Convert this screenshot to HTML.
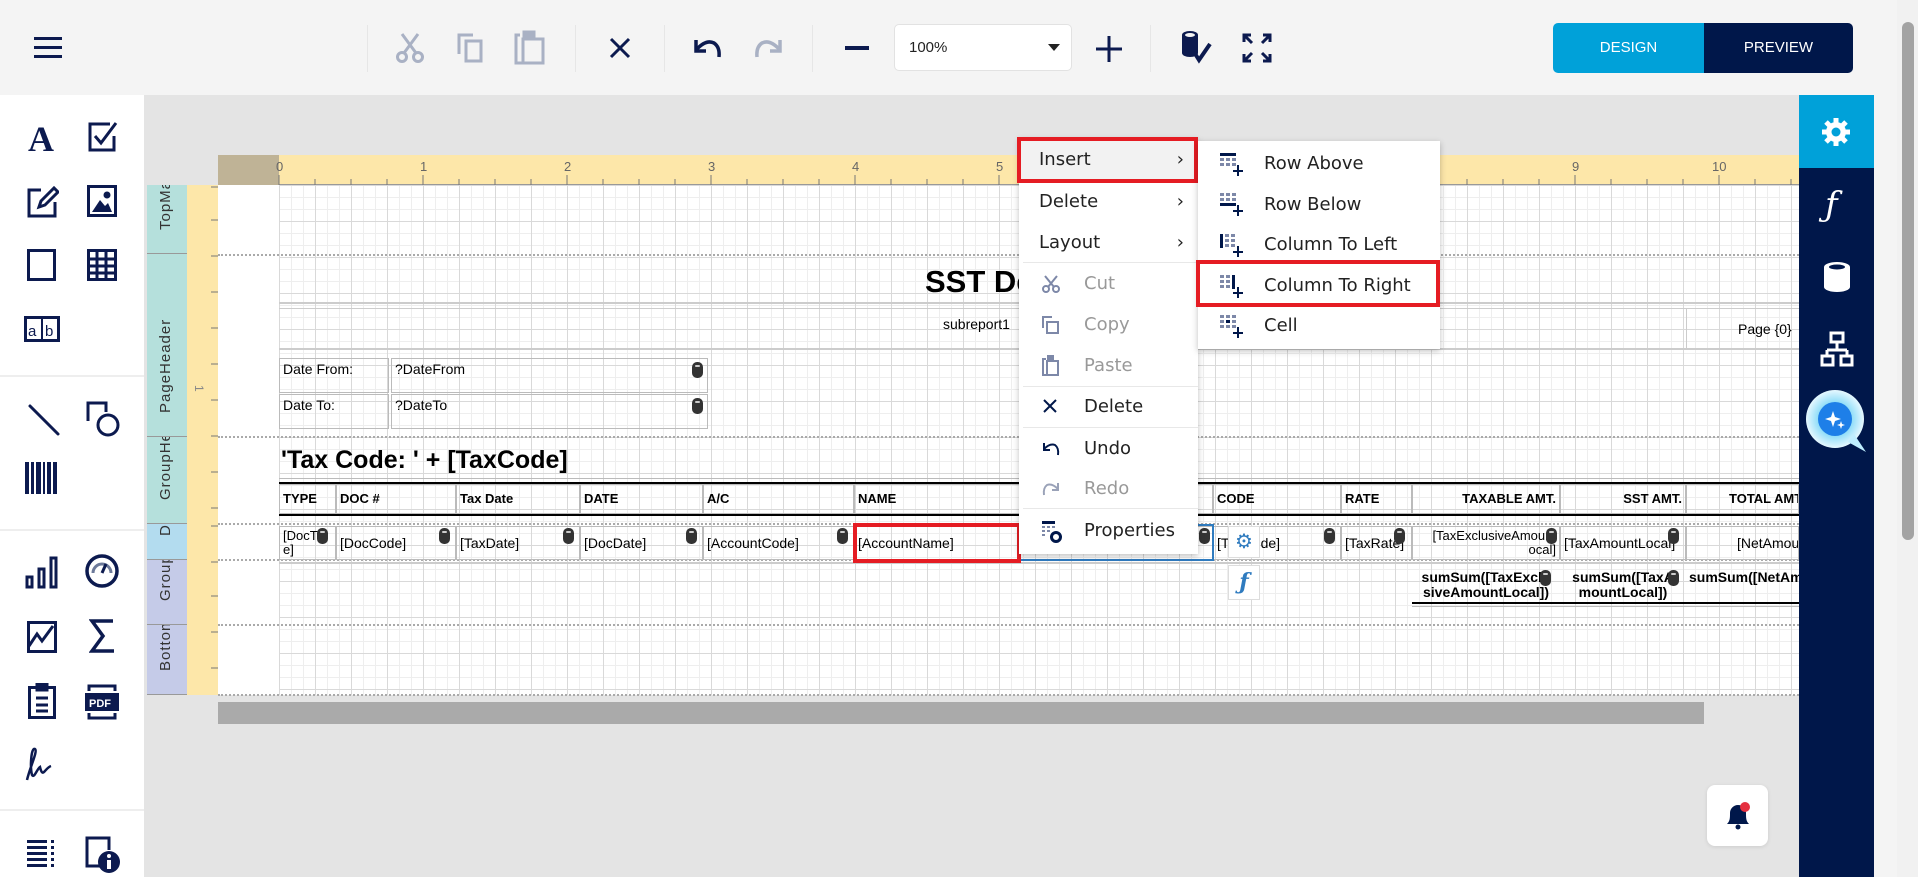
<!DOCTYPE html>
<html><head><meta charset="utf-8"><style>
*{box-sizing:border-box;margin:0;padding:0}
body{width:1918px;height:877px;overflow:hidden;background:#e4e4e4;font-family:"Liberation Sans",sans-serif;position:relative;color:#000}
.a{position:absolute}
.tb{left:0;top:0;width:1918px;height:95px;background:#f4f4f4}
.sep{position:absolute;top:25px;width:1px;height:47px;background:#e6e6e6}
.side{left:0;top:95px;width:144px;height:782px;background:#fff}
.hl{position:absolute;left:0;width:144px;height:2px;background:#eee}
.ic{position:absolute}
.grid{background-color:#fff;background-image:
linear-gradient(to right,#d9d9d9 1px,transparent 1px),
linear-gradient(to bottom,#d9d9d9 1px,transparent 1px),
linear-gradient(to right,#eeeeee 1px,transparent 1px),
linear-gradient(to bottom,#eeeeee 1px,transparent 1px);
background-size:36px 36px,36px 36px,12px 12px,12px 12px}
.band{position:absolute;left:147px;width:40px;font-size:15px;color:#333;overflow:hidden;border-bottom:1px solid #999}
.band span{position:absolute;left:10px;bottom:6px;transform-origin:0 0;transform:rotate(-90deg) translate(0,0);white-space:nowrap;letter-spacing:1px}
.dash{position:absolute;left:218px;width:1581px;border-top:2px dotted #aaa}
.cell{position:absolute;font-size:14px;border:1px solid #bbb;padding:2px 3px;overflow:hidden;white-space:nowrap;line-height:16px}
.h{font-weight:bold;font-size:13px}
.db{position:absolute;width:11px;height:16px;background:#333;border-radius:5px}
.db:after{content:"";position:absolute;left:3px;top:3px;width:5px;height:2px;background:#ccc;border-radius:1px}
.menu{position:absolute;background:#fff;box-shadow:0 2px 6px rgba(0,0,0,.25);font-family:"DejaVu Sans","Liberation Sans",sans-serif;font-size:18px;color:#222}
.mi{position:absolute;left:0;right:0;height:41px;line-height:41px}
.dis{color:#999}
.msep{position:absolute;left:4px;right:0;height:1px;background:#e8e8e8}
.red{position:absolute;border:4px solid #e51c23}
</style></head><body>

<!-- toolbar -->
<div class="a tb"></div>
<svg class="ic" style="left:34px;top:36px" width="28" height="24"><g fill="#0c1a4f"><rect y="1" width="28" height="3"/><rect y="10" width="28" height="3"/><rect y="19" width="28" height="3"/></g></svg>
<div class="sep" style="left:367px"></div>
<svg class="ic" style="left:394px;top:32px" width="32" height="32" fill="none" stroke="#a9b1c4" stroke-width="3"><circle cx="8" cy="25" r="4.5"/><circle cx="24" cy="25" r="4.5"/><path d="M10 21 L24 2 M22 21 L8 2"/></svg>
<svg class="ic" style="left:456px;top:32px" width="30" height="32" fill="none" stroke="#a9b1c4" stroke-width="3"><path d="M3 22V3h14"/><rect x="10" y="9" width="15" height="20"/></svg>
<svg class="ic" style="left:514px;top:29px" width="32" height="36" fill="none" stroke="#a9b1c4" stroke-width="3"><path d="M6 6H2v28h6"/><rect x="9" y="10" width="20" height="24"/><rect x="10" y="3" width="10" height="5" fill="#a9b1c4"/></svg>
<div class="sep" style="left:575px"></div>
<svg class="ic" style="left:608px;top:36px" width="24" height="24" stroke="#0c1a4f" stroke-width="3"><path d="M3 3L21 21M21 3L3 21"/></svg>
<div class="sep" style="left:664px"></div>
<svg class="ic" style="left:692px;top:35px" width="32" height="26" fill="none" stroke="#0c1a4f" stroke-width="3.5"><path d="M4 5V16H14"/><path d="M4 15Q14 4 22 8Q28 12 27 22"/></svg>
<svg class="ic" style="left:752px;top:35px" width="32" height="26" fill="none" stroke="#a9b1c4" stroke-width="3.5"><path d="M28 5V16H18"/><path d="M28 15Q18 4 10 8Q4 12 5 22"/></svg>
<div class="sep" style="left:812px"></div>
<div class="a" style="left:845px;top:46px;width:24px;height:4px;background:#0c1a4f"></div>
<div class="a" style="left:894px;top:24px;width:178px;height:47px;background:#fff;border:1px solid #e2e2e2;border-radius:5px;font-size:15px;line-height:45px;padding-left:14px;color:#222">100%</div>
<svg class="ic" style="left:1048px;top:44px" width="12" height="8"><path d="M0 0H12L6 7z" fill="#222"/></svg>
<svg class="ic" style="left:1096px;top:36px" width="26" height="26" stroke="#0c1a4f" stroke-width="3"><path d="M13 0V26M0 13H26"/></svg>
<div class="sep" style="left:1150px"></div>
<svg class="ic" style="left:1180px;top:30px" width="36" height="36"><path d="M2 5a8 4 0 0 1 16 0v18a8 4 0 0 1-16 0z" fill="#0c1a4f"/><ellipse cx="10" cy="5" rx="5" ry="2" fill="#f4f4f4"/><path d="M14 22l5 8 11-16" fill="none" stroke="#0c1a4f" stroke-width="4"/></svg>
<svg class="ic" style="left:1242px;top:33px" width="30" height="30" fill="none" stroke="#0c1a4f" stroke-width="3"><path d="M2 9V2h7M2 2l8 8M28 9V2h-7M28 2l-8 8M2 21v7h7M2 28l8-8M28 21v7h-7M28 28l-8-8"/></svg>
<div class="a" style="left:1553px;top:23px;width:151px;height:50px;background:#00a1d9;border-radius:5px 0 0 5px;color:#fff;font-size:15px;text-align:center;line-height:50px">DESIGN</div>
<div class="a" style="left:1704px;top:23px;width:149px;height:50px;background:#00174a;border-radius:0 5px 5px 0;color:#fff;font-size:15px;text-align:center;line-height:50px">PREVIEW</div>

<!-- scroll -->
<div class="a" style="left:1874px;top:0;width:23px;height:877px;background:#f4f4f4"></div>
<div class="a" style="left:1897px;top:0;width:21px;height:877px;background:#f1f1f1"></div>
<div class="a" style="left:1902px;top:22px;width:12px;height:518px;background:#a3a3a3;border-radius:6px"></div>

<!-- left sidebar -->
<div class="a side"></div>
<div class="hl" style="top:375px"></div><div class="hl" style="top:529px"></div><div class="hl" style="top:809px"></div>
<div class="a" style="left:28px;top:118px;font:bold 36px 'Liberation Serif',serif;color:#0c1a4f">A</div>
<svg class="ic" style="left:88px;top:122px" width="30" height="30" fill="none" stroke="#0c1a4f" stroke-width="3"><path d="M22 2H2v26h24V14"/><path d="M7 14l6 7L28 1"/></svg>
<svg class="ic" style="left:27px;top:186px" width="32" height="32" fill="none" stroke="#0c1a4f" stroke-width="3"><path d="M14 4H2v26h26V16"/><path d="M12 21l2-6L27 2l4 4-13 13z"/></svg>
<svg class="ic" style="left:87px;top:185px" width="30" height="32"><rect x="1.5" y="1.5" width="27" height="29" fill="none" stroke="#0c1a4f" stroke-width="3"/><path d="M5 27l8-12 5 6 3-3 4 9z" fill="#0c1a4f"/><circle cx="20" cy="10" r="3.5" fill="#0c1a4f"/></svg>
<svg class="ic" style="left:27px;top:249px" width="30" height="32" fill="none" stroke="#0c1a4f" stroke-width="3"><rect x="1.5" y="1.5" width="26" height="29"/></svg>
<svg class="ic" style="left:87px;top:249px" width="30" height="32"><rect x="1.5" y="1.5" width="27" height="29" fill="none" stroke="#0c1a4f" stroke-width="3"/><path d="M1 10H29M1 17H29M1 24H29M10 1V31M19 1V31" stroke="#0c1a4f" stroke-width="3"/></svg>
<svg class="ic" style="left:24px;top:316px" width="36" height="26"><rect x="1.5" y="1.5" width="33" height="23" fill="none" stroke="#0c1a4f" stroke-width="3"/><path d="M18 1V25" stroke="#0c1a4f" stroke-width="2"/><text x="4" y="20" font-size="15" font-family="Liberation Sans" fill="#0c1a4f">a</text><text x="21" y="20" font-size="15" font-family="Liberation Sans" fill="#0c1a4f">b</text></svg>
<svg class="ic" style="left:27px;top:403px" width="34" height="34" stroke="#0c1a4f" stroke-width="3" stroke-linecap="round"><path d="M3 3L31 31"/></svg>
<svg class="ic" style="left:86px;top:401px" width="34" height="36" fill="none" stroke="#0c1a4f" stroke-width="3"><path d="M2 20V2h18v9"/><circle cx="22" cy="24" r="10" fill="#fff"/></svg>
<svg class="ic" style="left:25px;top:462px" width="34" height="32" fill="#0c1a4f"><rect x="0" y="0" width="4" height="32"/><rect x="6" y="0" width="3" height="32"/><rect x="11" y="0" width="5" height="32"/><rect x="18" y="0" width="2" height="32"/><rect x="22" y="0" width="4" height="32"/><rect x="28" y="0" width="4" height="32"/></svg>
<svg class="ic" style="left:25px;top:555px" width="34" height="34" fill="none" stroke="#0c1a4f" stroke-width="3"><rect x="2" y="22" width="5" height="10"/><rect x="14" y="14" width="5" height="18"/><rect x="26" y="3" width="5" height="29"/></svg>
<svg class="ic" style="left:84px;top:553px" width="36" height="36" fill="none" stroke="#0c1a4f" stroke-width="3.5"><circle cx="18" cy="18" r="15"/><path d="M9 20a9 9 0 0 1 18 0" stroke="#6d7a9a" stroke-width="3"/><path d="M18 20l4-9" stroke-width="3"/></svg>
<svg class="ic" style="left:27px;top:621px" width="30" height="32" fill="none" stroke="#0c1a4f" stroke-width="3"><rect x="1.5" y="1.5" width="27" height="29"/><path d="M2 25l8-12 5 7 11-15"/></svg>
<svg class="ic" style="left:89px;top:619px" width="26" height="34" fill="none" stroke="#0c1a4f" stroke-width="3.5"><path d="M24 2H3l11 15L3 32h22"/></svg>
<svg class="ic" style="left:28px;top:683px" width="28" height="36" fill="none" stroke="#0c1a4f" stroke-width="3"><rect x="1.5" y="4.5" width="25" height="30"/><rect x="9" y="1" width="10" height="6" fill="#0c1a4f"/><path d="M8 15h12M8 22h12M8 28h12"/></svg>
<svg class="ic" style="left:85px;top:684px" width="34" height="36"><path d="M4 7V2h26v5M4 29v5h26v-5" fill="none" stroke="#0c1a4f" stroke-width="3"/><rect x="0" y="9" width="34" height="18" fill="#0c1a4f"/><text x="4" y="23" font-size="11" font-weight="bold" font-family="Liberation Sans" fill="#fff">PDF</text></svg>
<svg class="ic" style="left:24px;top:747px" width="36" height="34" fill="none" stroke="#0c1a4f" stroke-width="2.5"><path d="M3 33C6 20 14 4 11 2 7 0 6 20 8 28c2 4 5-6 8-8 1 4 2 7 4 5 2-2 4-5 7-6"/></svg>
<svg class="ic" style="left:27px;top:840px" width="30" height="30" fill="#0c1a4f"><rect x="0" y="0" width="20" height="3"/><rect x="0" y="6" width="20" height="3"/><rect x="0" y="12" width="20" height="3"/><rect x="0" y="18" width="20" height="3"/><rect x="0" y="24" width="20" height="3"/><rect x="24" y="0" width="3" height="3"/><rect x="24" y="6" width="3" height="3"/><rect x="24" y="12" width="3" height="3"/><rect x="24" y="18" width="3" height="3"/><rect x="24" y="24" width="3" height="3"/></svg>
<svg class="ic" style="left:85px;top:836px" width="36" height="38"><path d="M18 30H2V2h22v12" fill="none" stroke="#0c1a4f" stroke-width="3"/><circle cx="24" cy="26" r="11" fill="#0c1a4f"/><rect x="22" y="24" width="4" height="9" fill="#fff"/><circle cx="24" cy="20" r="2" fill="#fff"/></svg>

<!-- right panel -->
<div class="a" style="left:1799px;top:95px;width:75px;height:782px;background:#00174a"></div>
<div class="a" style="left:1799px;top:95px;width:75px;height:73px;background:#00a1d9"></div>
<svg class="ic" style="left:1821px;top:117px" width="30" height="30" viewBox="0 0 30 30"><g fill="#fff"><circle cx="15" cy="15" r="10"/><g stroke="#fff" stroke-width="5"><path d="M15 1V29M1 15H29M5 5L25 25M25 5L5 25"/></g></g><circle cx="15" cy="15" r="4.5" fill="#00a1d9"/></svg>
<div class="a" style="left:1825px;top:185px;color:#fff;font:italic 34px 'DejaVu Serif',serif">ƒ</div>
<svg class="ic" style="left:1824px;top:262px" width="26" height="30"><path d="M0 5a13 5 0 0 1 26 0v20a13 5 0 0 1-26 0z" fill="#fff"/><ellipse cx="13" cy="5" rx="8" ry="2.5" fill="#00174a"/></svg>
<svg class="ic" style="left:1820px;top:331px" width="34" height="36" fill="none" stroke="#fff" stroke-width="3"><rect x="11" y="2" width="12" height="9"/><path d="M17 11v8M7 19v6M27 19v6M7 19h20"/><rect x="2" y="25" width="11" height="9"/><rect x="21" y="25" width="11" height="9"/></svg>
<svg class="ic" style="left:1804px;top:387px" width="66" height="68"><defs><radialGradient id="g"><stop offset="0.5" stop-color="#7fd8f7"/><stop offset="1" stop-color="#e6f8ff"/></radialGradient></defs><circle cx="31" cy="32" r="29" fill="url(#g)"/><path d="M44 55l18 10-12-18z" fill="#bfeeff"/><circle cx="31" cy="32" r="17" fill="#1e7fe8"/><path d="M29 24l2 6 6 2-6 2-2 6-2-6-6-2 6-2z M37 34l1 3 3 1-3 1-1 3-1-3-3-1 3-1z" fill="#fff"/></svg>

<!-- canvas: ruler -->
<div class="a" style="left:218px;top:155px;width:1581px;height:30px;background:#fde7a9;border-bottom:1px solid #999"></div>
<div class="a" style="left:218px;top:155px;width:61px;height:30px;background:#bfb396"></div>
<svg class="ic" style="left:218px;top:155px" width="1581" height="30">
<g stroke="#777" stroke-width="1">
<path d="M61 20V30M97 24V30M133 24V30M169 24V30M205 20V30M241 24V30M277 24V30M313 24V30M349 20V30M385 24V30M421 24V30M457 24V30M493 20V30M529 24V30M565 24V30M601 24V30M637 20V30M673 24V30M709 24V30M745 24V30M781 20V30M817 24V30M853 24V30M889 24V30M925 20V30M961 24V30M997 24V30M1033 24V30M1069 20V30M1105 24V30M1141 24V30M1177 24V30M1213 20V30M1249 24V30M1285 24V30M1321 24V30M1357 20V30M1393 24V30M1429 24V30M1465 24V30M1501 20V30M1537 24V30M1573 24V30"/>
</g>
<g font-family="Liberation Sans" font-size="13" fill="#666"><text x="58" y="16">0</text><text x="202" y="16">1</text><text x="346" y="16">2</text><text x="490" y="16">3</text><text x="634" y="16">4</text><text x="778" y="16">5</text><text x="1354" y="16">9</text><text x="1494" y="16">10</text></g>
</svg>

<!-- band labels -->
<div class="band" style="top:185px;height:69px;background:#b5e0dc"><span>TopMar</span></div>
<div class="band" style="top:254px;height:183px;background:#b5e0dc"><span>PageHeader</span></div>
<div class="band" style="top:437px;height:87px;background:#b5e0dc"><span>GroupHea</span></div>
<div class="band" style="top:524px;height:36px;background:#b3dcef"><span>Del</span></div>
<div class="band" style="top:560px;height:65px;background:#c5cbe8"><span>GroupF</span></div>
<div class="band" style="top:625px;height:70px;background:#c5cbe8"><span>Bottoml</span></div>
<div class="a" style="left:187px;top:185px;width:31px;height:510px;background:#fde7a9"></div>
<svg class="ic" style="left:187px;top:185px" width="31" height="510"><g stroke="#777"><path d="M24 2H31M24 35H31M24 71H31M24 107H31M24 143H31M24 179H31M24 215H31M24 251H31M24 287H31M24 323H31M24 341H31M24 377H31M24 411H31M24 447H31M24 483H31"/></g><g font-family="Liberation Sans" font-size="12" fill="#888"><text x="9" y="207" transform="rotate(90 12 203)">1</text></g></svg>

<!-- page -->
<div class="a" style="left:218px;top:185px;width:61px;height:510px;background:#fff"></div>
<div class="a grid" style="left:279px;top:185px;width:1520px;height:510px;background-position:0 0"></div>
<div class="dash" style="top:254px"></div><div class="dash" style="top:436px"></div><div class="dash" style="top:523px"></div><div class="dash" style="top:559px"></div><div class="dash" style="top:624px"></div><div class="dash" style="top:694px"></div>
<div class="a" style="left:218px;top:702px;width:1486px;height:22px;background:#aaa"></div>

<!-- page header contents -->
<div class="a" style="left:279px;top:302px;width:1520px;height:2px;background:#ccc"></div>
<div class="a" style="left:279px;top:308px;width:1520px;height:1px;background:#ccc"></div>
<div class="a" style="left:279px;top:348px;width:1520px;height:2px;background:#ccc"></div>
<div class="a" style="left:1686px;top:308px;width:1px;height:41px;background:#ccc"></div>
<div class="a" style="left:925px;top:264px;font-weight:bold;font-size:31px">SST Details</div>
<div class="a" style="left:943px;top:316px;font-size:14px">subreport1</div>
<div class="a" style="left:1738px;top:321px;font-size:14px">Page {0}</div>
<div class="cell" style="left:279px;top:358px;width:110px;height:35px">Date From:</div>
<div class="cell" style="left:391px;top:358px;width:317px;height:35px">?DateFrom</div>
<div class="cell" style="left:279px;top:394px;width:110px;height:35px">Date To:</div>
<div class="cell" style="left:391px;top:394px;width:317px;height:35px">?DateTo</div>
<div class="db" style="left:692px;top:362px"></div><div class="db" style="left:692px;top:398px"></div>

<!-- group header -->
<div class="a" style="left:281px;top:446px;font-weight:bold;font-size:25px">'Tax Code: ' + [TaxCode]</div>
<div class="a" style="left:279px;top:478px;width:1520px;height:1px;background:#bbb"></div>
<div class="a" style="left:279px;top:482px;width:1520px;height:2px;background:#000"></div>
<div class="a" style="left:279px;top:514px;width:1520px;height:2px;background:#000"></div>
<div class="cell h" style="left:279px;top:484px;width:57px;height:30px;line-height:24px">TYPE</div>
<div class="cell h" style="left:336px;top:484px;width:120px;height:30px;line-height:24px">DOC #</div>
<div class="cell h" style="left:456px;top:484px;width:124px;height:30px;line-height:24px">Tax Date</div>
<div class="cell h" style="left:580px;top:484px;width:123px;height:30px;line-height:24px">DATE</div>
<div class="cell h" style="left:703px;top:484px;width:151px;height:30px;line-height:24px">A/C</div>
<div class="cell h" style="left:854px;top:484px;width:359px;height:30px;line-height:24px">NAME</div>
<div class="cell h" style="left:1213px;top:484px;width:128px;height:30px;line-height:24px">CODE</div>
<div class="cell h" style="left:1341px;top:484px;width:71px;height:30px;line-height:24px">RATE</div>
<div class="cell h" style="left:1412px;top:484px;width:148px;height:30px;line-height:24px;text-align:right">TAXABLE AMT.</div>
<div class="cell h" style="left:1560px;top:484px;width:126px;height:30px;line-height:24px;text-align:right">SST AMT.</div>
<div class="cell h" style="left:1686px;top:484px;width:113px;height:30px;line-height:24px;padding-left:42px">TOTAL AMT.</div>

<!-- detail -->
<div class="cell" style="left:279px;top:526px;width:57px;height:34px;font-size:13px;line-height:14px;white-space:normal">[DocT<br>e]</div>
<div class="cell" style="left:336px;top:526px;width:120px;height:34px;line-height:28px">[DocCode]</div>
<div class="cell" style="left:456px;top:526px;width:124px;height:34px;line-height:28px">[TaxDate]</div>
<div class="cell" style="left:580px;top:526px;width:123px;height:34px;line-height:28px">[DocDate]</div>
<div class="cell" style="left:703px;top:526px;width:151px;height:34px;line-height:28px">[AccountCode]</div>
<div class="cell" style="left:854px;top:526px;width:359px;height:34px;line-height:28px">[AccountName]</div>
<div class="cell" style="left:1213px;top:526px;width:128px;height:34px;line-height:28px">[TaxCode]</div>
<div class="cell" style="left:1341px;top:526px;width:71px;height:34px;line-height:28px">[TaxRate]</div>
<div class="cell" style="left:1412px;top:526px;width:148px;height:34px;font-size:13px;line-height:14px;white-space:normal;text-align:right">[TaxExclusiveAmount<br>ocal]</div>
<div class="cell" style="left:1560px;top:526px;width:126px;height:34px;line-height:28px">[TaxAmountLocal]</div>
<div class="cell" style="left:1686px;top:526px;width:113px;height:34px;line-height:28px;padding-left:50px">[NetAmountLocal]</div>
<div class="db" style="left:317px;top:528px"></div><div class="db" style="left:439px;top:528px"></div><div class="db" style="left:563px;top:528px"></div><div class="db" style="left:686px;top:528px"></div><div class="db" style="left:837px;top:528px"></div><div class="db" style="left:1199px;top:528px"></div><div class="db" style="left:1324px;top:528px"></div><div class="db" style="left:1394px;top:528px"></div><div class="db" style="left:1546px;top:528px"></div><div class="db" style="left:1668px;top:528px"></div>
<div class="a" style="left:279px;top:562px;width:1520px;height:2px;background:#ccc"></div>
<div class="a" style="left:1020px;top:524px;width:194px;height:37px;border:2px solid #2f7bbf;border-left:none"></div>
<div class="red" style="left:853px;top:523px;width:168px;height:40px"></div>
<div class="a" style="left:1228px;top:526px;width:32px;height:32px;background:#fff;border:1px solid #ddd;color:#2f7bbf;font-size:20px;text-align:center;line-height:30px">⚙</div>
<div class="a" style="left:1228px;top:565px;width:32px;height:35px;background:#fff;border:1px solid #ddd;color:#2f7bbf;font:bold italic 22px 'DejaVu Serif',serif;text-align:center;line-height:33px">ƒ</div>

<!-- group footer -->
<div class="cell h" style="left:1412px;top:568px;width:148px;height:34px;font-size:14px;line-height:15px;border:none;text-align:center;white-space:normal">sumSum([TaxExclu<br>siveAmountLocal])</div>
<div class="cell h" style="left:1560px;top:568px;width:126px;height:34px;font-size:14px;line-height:15px;border:none;text-align:center;white-space:normal">sumSum([TaxA<br>mountLocal])</div>
<div class="cell h" style="left:1686px;top:568px;width:113px;height:34px;font-size:14px;line-height:15px;border:none">sumSum([NetAmo</div>
<div class="a" style="left:1412px;top:602px;width:387px;height:2px;background:#000"></div>
<div class="a" style="left:1412px;top:606px;width:387px;height:1px;background:#bbb"></div>
<div class="db" style="left:1540px;top:570px"></div><div class="db" style="left:1668px;top:570px"></div>

<!-- notification -->
<div class="a" style="left:1707px;top:785px;width:61px;height:61px;background:#fff;border-radius:8px;box-shadow:0 1px 4px rgba(0,0,0,.1)"></div>
<svg class="ic" style="left:1725px;top:801px" width="28" height="30"><path d="M2 23c3-3 3-6 3-11a8 8 0 0 1 16 0c0 5 0 8 3 11z" fill="#00174a"/><circle cx="13" cy="26" r="2.5" fill="#00174a"/><circle cx="20" cy="6" r="5" fill="#e53040"/></svg>

<!-- context menu -->
<div class="menu" style="left:1019px;top:138px;width:179px;height:416px">
<div class="mi" style="top:1px;background:#f2f2f2;padding-left:20px">Insert<span style="position:absolute;right:14px">›</span></div>
<div class="mi" style="top:43px;padding-left:20px">Delete<span style="position:absolute;right:14px">›</span></div>
<div class="mi" style="top:84px;padding-left:20px">Layout<span style="position:absolute;right:14px">›</span></div>
<div class="msep" style="top:124px"></div>
<div class="mi dis" style="top:125px;padding-left:65px">Cut</div>
<div class="mi dis" style="top:166px;padding-left:65px">Copy</div>
<div class="mi dis" style="top:207px;padding-left:65px">Paste</div>
<div class="msep" style="top:248px"></div>
<div class="mi" style="top:248px;padding-left:65px">Delete</div>
<div class="msep" style="top:289px"></div>
<div class="mi" style="top:290px;padding-left:65px">Undo</div>
<div class="mi dis" style="top:330px;padding-left:65px">Redo</div>
<div class="msep" style="top:370px"></div>
<div class="mi" style="top:372px;padding-left:65px">Properties</div>
<svg class="ic" style="left:22px;top:136px" width="20" height="20" fill="none" stroke="#7d88a8" stroke-width="2"><circle cx="5" cy="15" r="3"/><circle cx="15" cy="15" r="3"/><path d="M7 13L16 2M13 13L4 2"/></svg>
<svg class="ic" style="left:22px;top:177px" width="20" height="20" fill="none" stroke="#7d88a8" stroke-width="2"><path d="M2 13V2h9"/><rect x="6" y="7" width="11" height="11"/></svg>
<svg class="ic" style="left:22px;top:217px" width="20" height="22" fill="none" stroke="#7d88a8" stroke-width="2"><path d="M5 4H2v16h3"/><rect x="6" y="6" width="11" height="14"/><rect x="7" y="1" width="5" height="3" fill="#7d88a8"/></svg>
<svg class="ic" style="left:24px;top:261px" width="14" height="14" stroke="#00174a" stroke-width="2"><path d="M1 1L13 13M13 1L1 13"/></svg>
<svg class="ic" style="left:22px;top:302px" width="20" height="18" fill="none" stroke="#00174a" stroke-width="2"><path d="M3 3V10H9"/><path d="M3 9Q9 3 14 5Q18 8 17 15"/></svg>
<svg class="ic" style="left:22px;top:342px" width="20" height="18" fill="none" stroke="#9aa2b8" stroke-width="2"><path d="M17 3V10H11"/><path d="M17 9Q11 3 6 5Q2 8 3 15"/></svg>
<svg class="ic" style="left:22px;top:382px" width="22" height="24"><rect x="1" y="1" width="13" height="3" fill="#00174a"/><g fill="#7d88a8"><rect x="1" y="6" width="3" height="2"/><rect x="6" y="6" width="3" height="2"/><rect x="11" y="6" width="3" height="2"/><rect x="1" y="10" width="3" height="2"/><rect x="6" y="10" width="3" height="2"/><rect x="1" y="14" width="3" height="2"/></g><circle cx="15" cy="17" r="4.5" fill="none" stroke="#00174a" stroke-width="3"/></svg>
</div>
<div class="red" style="left:1017px;top:137px;width:181px;height:46px"></div>

<!-- submenu -->
<div class="menu" style="left:1198px;top:141px;width:242px;height:208px">
<div class="mi" style="top:2px;padding-left:66px">Row Above</div>
<div class="mi" style="top:43px;padding-left:66px">Row Below</div>
<div class="mi" style="top:83px;padding-left:66px">Column To Left</div>
<div class="mi" style="top:124px;padding-left:66px">Column To Right</div>
<div class="mi" style="top:164px;padding-left:66px">Cell</div>
<svg class="ic" style="left:22px;top:12px" width="24" height="24"><rect x="0" y="0" width="16" height="3" fill="#00174a"/><g fill="#7d88a8"><rect x="0" y="5" width="4" height="3"/><rect x="6" y="5" width="4" height="3"/><rect x="12" y="5" width="4" height="3"/><rect x="0" y="10" width="4" height="3"/><rect x="6" y="10" width="4" height="3"/><rect x="12" y="10" width="4" height="3"/></g><path d="M18 12v11M13 18h10" stroke="#00174a" stroke-width="2"/></svg>
<svg class="ic" style="left:22px;top:52px" width="24" height="24"><g fill="#7d88a8"><rect x="0" y="0" width="4" height="3"/><rect x="6" y="0" width="4" height="3"/><rect x="12" y="0" width="4" height="3"/><rect x="0" y="5" width="4" height="3"/><rect x="6" y="5" width="4" height="3"/><rect x="12" y="5" width="4" height="3"/></g><rect x="0" y="10" width="16" height="3" fill="#00174a"/><path d="M18 12v11M13 18h10" stroke="#00174a" stroke-width="2"/></svg>
<svg class="ic" style="left:22px;top:93px" width="24" height="24"><rect x="0" y="0" width="3" height="14" fill="#00174a"/><g fill="#7d88a8"><rect x="5" y="0" width="4" height="3"/><rect x="11" y="0" width="4" height="3"/><rect x="5" y="5" width="4" height="3"/><rect x="11" y="5" width="4" height="3"/><rect x="5" y="10" width="4" height="3"/><rect x="11" y="10" width="4" height="3"/></g><path d="M18 12v11M13 18h10" stroke="#00174a" stroke-width="2"/></svg>
<svg class="ic" style="left:22px;top:134px" width="24" height="24"><g fill="#7d88a8"><rect x="0" y="0" width="4" height="3"/><rect x="6" y="0" width="4" height="3"/><rect x="0" y="5" width="4" height="3"/><rect x="6" y="5" width="4" height="3"/><rect x="0" y="10" width="4" height="3"/><rect x="6" y="10" width="4" height="3"/></g><rect x="12" y="0" width="3" height="14" fill="#00174a"/><path d="M18 12v11M13 18h10" stroke="#00174a" stroke-width="2"/></svg>
<svg class="ic" style="left:22px;top:174px" width="24" height="24"><g fill="#7d88a8"><rect x="0" y="0" width="4" height="3"/><rect x="6" y="0" width="4" height="3"/><rect x="12" y="0" width="4" height="3"/><rect x="0" y="5" width="4" height="3"/><rect x="12" y="5" width="4" height="3"/><rect x="0" y="10" width="4" height="3"/><rect x="6" y="10" width="4" height="3"/><rect x="12" y="10" width="4" height="3"/></g><rect x="6" y="5" width="4" height="3" fill="#00174a"/><path d="M18 12v11M13 18h10" stroke="#00174a" stroke-width="2"/></svg>
</div>
<div class="red" style="left:1196px;top:260px;width:244px;height:47px"></div>
</body></html>
